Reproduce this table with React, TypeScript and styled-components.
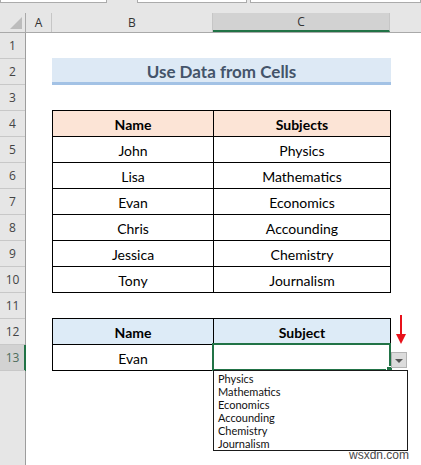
import React from "react";
import styled, { createGlobalStyle } from "styled-components";

const GlobalStyle = createGlobalStyle`
  html, body {
    margin: 0;
    padding: 0;
    background: #ffffff;
  }
  body {
    font-family: Lato, "Open Sans", sans-serif;
  }
`;

const Window = styled.div`
  position: relative;
  width: 421px;
  height: 465px;
  overflow: hidden;
  background: #ffffff;
  display: flex;
  flex-direction: column;
`;

const TopStrip = styled.div`
  height: 13px;
  flex: none;
  background: #e6e6e6;
  display: flex;
  align-items: flex-start;
`;

const FieldBox = styled.div<{ $w: string; $ml: number }>`
  height: 2px;
  width: ${(p) => p.$w};
  margin-left: ${(p) => p.$ml}px;
  background: #ffffff;
  border: 1px solid #ababab;
  border-top: none;
`;

const ColumnHeaderRow = styled.div`
  height: 20px;
  flex: none;
  box-sizing: border-box;
  display: grid;
  grid-template-columns: 26px 26px 161px 177px 1fr;
  background: #e6e6e6;
  border-bottom: 1px solid #a9a9a9;
`;

const Corner = styled.div`
  position: relative;
  border-right: 1px solid #a9a9a9;
  &::after {
    content: "";
    position: absolute;
    right: 3px;
    bottom: 3px;
    width: 12px;
    height: 12px;
    background: #bcbcbc;
    clip-path: polygon(100% 0, 100% 100%, 0 100%);
  }
`;

const ColHead = styled.div<{ $active?: boolean; $last?: boolean }>`
  display: flex;
  align-items: center;
  justify-content: center;
  box-sizing: border-box;
  font-family: "Open Sans", sans-serif;
  font-size: 12px;
  color: #333333;
  background: ${(p) => (p.$active ? "#d2d2d2" : "transparent")};
  border-right: ${(p) => (p.$last ? "none" : "1px solid #c6c6c6")};
  border-bottom: ${(p) => (p.$active ? "2px solid #217346" : "none")};
`;

const Body = styled.div`
  flex: 1;
  display: flex;
`;

const RowHeaders = styled.div`
  width: 25px;
  flex: none;
  background: #e6e6e6;
  border-right: 1px solid #9d9d9d;
  display: flex;
  flex-direction: column;
`;

const RowNum = styled.div<{ $active?: boolean }>`
  height: 26px;
  box-sizing: border-box;
  display: flex;
  align-items: flex-end;
  justify-content: center;
  padding-bottom: 4px;
  font-family: "Open Sans", sans-serif;
  font-size: 12px;
  color: ${(p) => (p.$active ? "#4f6d5c" : "#444444")};
  background: ${(p) => (p.$active ? "#d2d2d2" : "transparent")};
  border-bottom: 1px solid #c8c8c8;
  box-shadow: ${(p) => (p.$active ? "inset -1px 0 0 #217346, 1px 0 0 #217346" : "none")};
`;

const SheetArea = styled.div`
  flex: 1;
  display: flex;
  flex-direction: column;
  padding-left: 26px;
`;

const Spacer = styled.div`
  height: 25px;
  flex: none;
`;

const TitleBand = styled.div`
  width: 339px;
  height: 27px;
  box-sizing: border-box;
  flex: none;
  display: flex;
  align-items: center;
  justify-content: center;
  background: #dde9f5;
  border-bottom: 3px solid #a3c2e5;
  font-size: 17px;
  font-weight: 700;
  color: #44546a;
  padding-top: 2px;
`;

const Table = styled.div`
  width: 339px;
  box-sizing: border-box;
  flex: none;
  display: grid;
  grid-template-columns: 161px 177px;
  border-top: 1px solid #000000;
  border-left: 1px solid #000000;
`;

const Cell = styled.div<{ $head?: string }>`
  position: relative;
  height: 26px;
  box-sizing: border-box;
  display: flex;
  align-items: center;
  justify-content: center;
  padding-top: 2px;
  border-right: 1px solid #000000;
  border-bottom: 1px solid #000000;
  background: ${(p) => p.$head ?? "#ffffff"};
  font-size: 14px;
  font-weight: ${(p) => (p.$head ? 700 : 400)};
  color: #000000;
`;

const Selection = styled.div`
  position: absolute;
  top: -2px;
  left: -2px;
  right: -1px;
  bottom: -1px;
  border: 2px solid #217346;
  pointer-events: none;
`;

const FillHandle = styled.div`
  position: absolute;
  right: -3px;
  bottom: -3px;
  width: 5px;
  height: 5px;
  background: #217346;
  border: 1px solid #ffffff;
`;

const DropButton = styled.div`
  position: absolute;
  left: 177px;
  top: 7px;
  width: 16px;
  height: 16px;
  box-sizing: border-box;
  background: #dcdcdc;
  border: 1px solid #b4b4b4;
  display: flex;
  align-items: center;
  justify-content: center;
  &::after {
    content: "";
    border-left: 4px solid transparent;
    border-right: 4px solid transparent;
    border-top: 4px solid #555555;
    margin-top: 1px;
  }
`;

const RedArrow = styled.svg`
  position: absolute;
  left: 182px;
  top: -30px;
`;

const DropList = styled.div`
  position: absolute;
  left: -1px;
  top: 25px;
  width: 195px;
  box-sizing: border-box;
  padding: 1px 0 0 4px;
  background: #ffffff;
  border: 1px solid #1a1a1a;
  display: flex;
  flex-direction: column;
  z-index: 2;
`;

const DropItem = styled.div`
  height: 13px;
  line-height: 13px;
  font-size: 11px;
  color: #111111;
  text-align: left;
`;

const Watermark = styled.div`
  position: absolute;
  right: 12px;
  bottom: 3px;
  font-family: "Liberation Sans", Arial, sans-serif;
  font-size: 12px;
  color: #4a4a4a;
`;

const people = [
  ["John", "Physics"],
  ["Lisa", "Mathematics"],
  ["Evan", "Economics"],
  ["Chris", "Accounding"],
  ["Jessica", "Chemistry"],
  ["Tony", "Journalism"],
];

const subjects = people.map((p) => p[1]);

export default function App() {
  return (
    <>
      <GlobalStyle />
      <Window>
        <TopStrip>
          <FieldBox $w="105px" $ml={0} />
          <FieldBox $w="108px" $ml={30} />
          <FieldBox $w="1fr" $ml={3} style={{ flex: 1 }} />
        </TopStrip>
        <ColumnHeaderRow>
          <Corner />
          <ColHead>A</ColHead>
          <ColHead>B</ColHead>
          <ColHead $active>C</ColHead>
          <ColHead $last />
        </ColumnHeaderRow>
        <Body>
          <RowHeaders>
            {Array.from({ length: 13 }, (_, i) => (
              <RowNum key={i} $active={i === 12}>
                {i + 1}
              </RowNum>
            ))}
          </RowHeaders>
          <SheetArea>
            <Spacer />
            <TitleBand>Use Data from Cells</TitleBand>
            <Spacer />
            <Table>
              <Cell $head="#fce4d6">Name</Cell>
              <Cell $head="#fce4d6">Subjects</Cell>
              {people.map(([name, subject]) => (
                <React.Fragment key={name}>
                  <Cell>{name}</Cell>
                  <Cell>{subject}</Cell>
                </React.Fragment>
              ))}
            </Table>
            <Spacer />
            <Table>
              <Cell $head="#ddebf7">Name</Cell>
              <Cell $head="#ddebf7">Subject</Cell>
              <Cell>Evan</Cell>
              <Cell>
                <Selection />
                <FillHandle />
                <RedArrow width="10" height="29" viewBox="0 0 10 29">
                  <rect x="4" y="0" width="2" height="20" fill="#e8111a" />
                  <polygon points="0,19 10,19 5,29" fill="#e8111a" />
                </RedArrow>
                <DropButton />
                <DropList>
                  {subjects.map((s) => (
                    <DropItem key={s}>{s}</DropItem>
                  ))}
                </DropList>
              </Cell>
            </Table>
          </SheetArea>
        </Body>
        <Watermark>wsxdn.com</Watermark>
      </Window>
    </>
  );
}
